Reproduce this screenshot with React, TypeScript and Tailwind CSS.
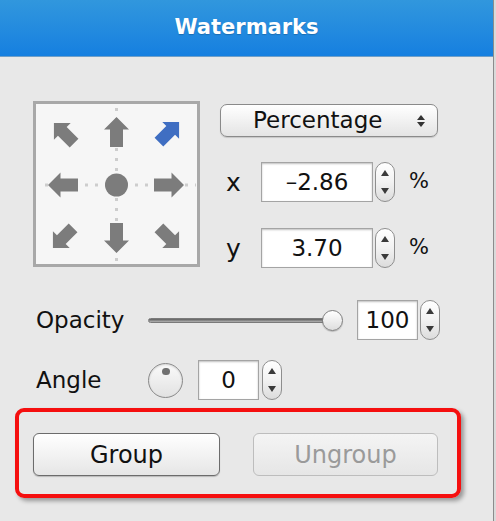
import React from "react";

const font = "font-['DejaVu_Sans','Liberation_Sans',sans-serif]";

function Stepper() {
    return (
        <div className="w-[20px] h-[40px] rounded-full border border-[#8e8e8e] bg-gradient-to-b from-[#ffffff] via-[#f2f2f2] to-[#dcdcdc] flex flex-col items-center justify-between py-[7px]">
            <svg width="8" height="6" viewBox="0 0 8 6"><path d="M4 0 L8 6 L0 6 Z" fill="#3a3a3a"/></svg>
            <svg width="8" height="6" viewBox="0 0 8 6"><path d="M0 0 L8 0 L4 6 Z" fill="#3a3a3a"/></svg>
        </div>
    );
}

function NumField({value, width}: { value: string; width: string }) {
    return (
        <div className={`${width} h-[40px] bg-white border border-[#a4a4a4] shadow-[inset_0_1px_2px_rgba(0,0,0,0.25)] flex items-center justify-center text-[23px] text-[#111]`}>
            {value}
        </div>
    );
}

// arrow pointing up, centred at 0,0
const ARROW = "M0 -15 L12.5 -2.5 L6.5 -2.5 L6.5 15 L-6.5 15 L-6.5 -2.5 L-12.5 -2.5 Z";

function PositionGrid() {
    const arrows = [
        {x: 83.5, y: 31, r: 0},
        {x: 83.5, y: 137, r: 180},
        {x: 30, y: 84, r: 270},
        {x: 136, y: 84, r: 90},
        {x: 31, y: 32, r: 315},
        {x: 30, y: 137, r: 225},
        {x: 136, y: 137, r: 135},
    ];
    return (
        <svg width="167" height="166" viewBox="0 0 167 166">
            <rect x="1.5" y="1.5" width="164" height="163" fill="#f6f6f6" stroke="#a8a8a8" strokeWidth="3"/>
            <line x1="83.5" y1="7" x2="83.5" y2="162" stroke="#cdcdcd" strokeWidth="3" strokeDasharray="3 7"/>
            <line x1="12" y1="84" x2="163" y2="84" stroke="#cdcdcd" strokeWidth="3" strokeDasharray="3 7"/>
            <circle cx="83.5" cy="84" r="11.5" fill="#7c7c7c"/>
            {arrows.map((a, i) => (
                <path key={i} d={ARROW} fill="#7c7c7c" transform={`translate(${a.x} ${a.y}) rotate(${a.r}) scale(${a.r % 90 ? 0.95 : 1})`}/>
            ))}
            <path d={ARROW} fill="#3f6ec2" transform="translate(136 31) rotate(45) scale(0.95)"/>
        </svg>
    );
}

export default function App() {
    return (
        <div className={`w-[496px] h-[521px] flex bg-[#e8e8e8] text-[#111] ${font}`}>
            <div className="w-[493px] flex flex-col">
                <div className="h-[57px] bg-gradient-to-b from-[#3197dd] to-[#157fe0] border-b border-[#6f9fc8] flex items-center justify-center">
                    <span className="text-white text-[21px] font-bold [text-shadow:0_1px_1px_rgba(0,0,0,0.2)]">Watermarks</span>
                </div>

                <div className="flex flex-col px-[15px]">
                    <div className="flex mt-[44px] ml-[18px]">
                        <PositionGrid/>
                        <div className="flex flex-col ml-[20px]">
                            <div className="mt-[3px] w-[218px] h-[33px] rounded-[7px] border border-[#8a8a8a] bg-gradient-to-b from-[#ffffff] to-[#e4e4e4] shadow-[0_1px_1px_rgba(0,0,0,0.15)] flex items-center">
                                <span className="text-[23px] ml-[32px] w-[155px]">Percentage</span>
                                <div className="ml-[9px] flex flex-col gap-[2px]">
                                    <svg width="8" height="5" viewBox="0 0 8 5"><path d="M4 0 L8 5 L0 5 Z" fill="#333"/></svg>
                                    <svg width="8" height="5" viewBox="0 0 8 5"><path d="M0 0 L8 0 L4 5 Z" fill="#333"/></svg>
                                </div>
                            </div>
                            <div className="flex items-center mt-[25px]">
                                <span className="w-[41px] pl-[6px] text-[25px] leading-none">x</span>
                                <NumField value="–2.86" width="w-[112px]"/>
                                <div className="ml-[2px]"><Stepper/></div>
                                <span className="ml-[14px] text-[21px]">%</span>
                            </div>
                            <div className="flex items-center mt-[26px]">
                                <span className="w-[41px] pl-[6px] text-[25px] leading-none">y</span>
                                <NumField value="3.70" width="w-[112px]"/>
                                <div className="ml-[2px]"><Stepper/></div>
                                <span className="ml-[14px] text-[21px]">%</span>
                            </div>
                        </div>
                    </div>

                    <div className="flex items-center mt-[32px] ml-[21px] h-[40px]">
                        <span className="w-[112px] text-[23px]">Opacity</span>
                        <div className="flex items-center w-[195px]">
                            <div className="w-[182px] h-[5px] rounded-full bg-gradient-to-b from-[#5e5e5e] to-[#b4b4b4] border border-[#7a7a7a]"/>
                            <div className="-ml-[8px] w-[21px] h-[21px] rounded-full border border-[#7e7e7e] bg-gradient-to-b from-[#ffffff] to-[#dedede] shadow-[0_1px_1px_rgba(0,0,0,0.2)]"/>
                        </div>
                        <div className="ml-[14px]"><NumField value="100" width="w-[61px]"/></div>
                        <div className="ml-[2px]"><Stepper/></div>
                    </div>

                    <div className="flex items-center mt-[20px] ml-[21px] h-[40px]">
                        <span className="w-[112px] text-[23px]">Angle</span>
                        <div className="relative w-[35px] h-[35px] rounded-full border border-[#8a8a8a] bg-gradient-to-b from-[#fafafa] to-[#e2e2e2] shadow-[inset_0_1px_2px_rgba(0,0,0,0.15)]">
                            <div className="absolute left-[13px] top-[4px] w-[8px] h-[7px] rounded-full bg-[#707070] blur-[0.5px]"/>
                        </div>
                        <div className="ml-[15px]"><NumField value="0" width="w-[61px]"/></div>
                        <div className="ml-[3px]"><Stepper/></div>
                    </div>

                    <div className="mt-[8px] w-[446px] h-[90px] rounded-[9px] border-[4px] border-[#f50f0f] shadow-[3px_3px_4px_rgba(0,0,0,0.35)] flex pl-[14px] pt-[21px]">
                        <div className="w-[187px] h-[43px] rounded-[6px] border border-[#6c6c6c] bg-gradient-to-b from-[#ffffff] to-[#e6e6e6] shadow-[0_1px_1px_rgba(0,0,0,0.2)] flex items-center justify-center text-[24px]">
                            Group
                        </div>
                        <div className="ml-[33px] w-[185px] h-[43px] rounded-[6px] border border-[#bdbdbd] bg-gradient-to-b from-[#f4f4f4] to-[#e6e6e6] flex items-center justify-center text-[24px] text-[#9a9a9a]">
                            Ungroup
                        </div>
                    </div>
                </div>
            </div>
            <div className="w-px bg-[#8c8c8c]"/>
            <div className="w-[2px] bg-[#dadada]"/>
        </div>
    );
}
